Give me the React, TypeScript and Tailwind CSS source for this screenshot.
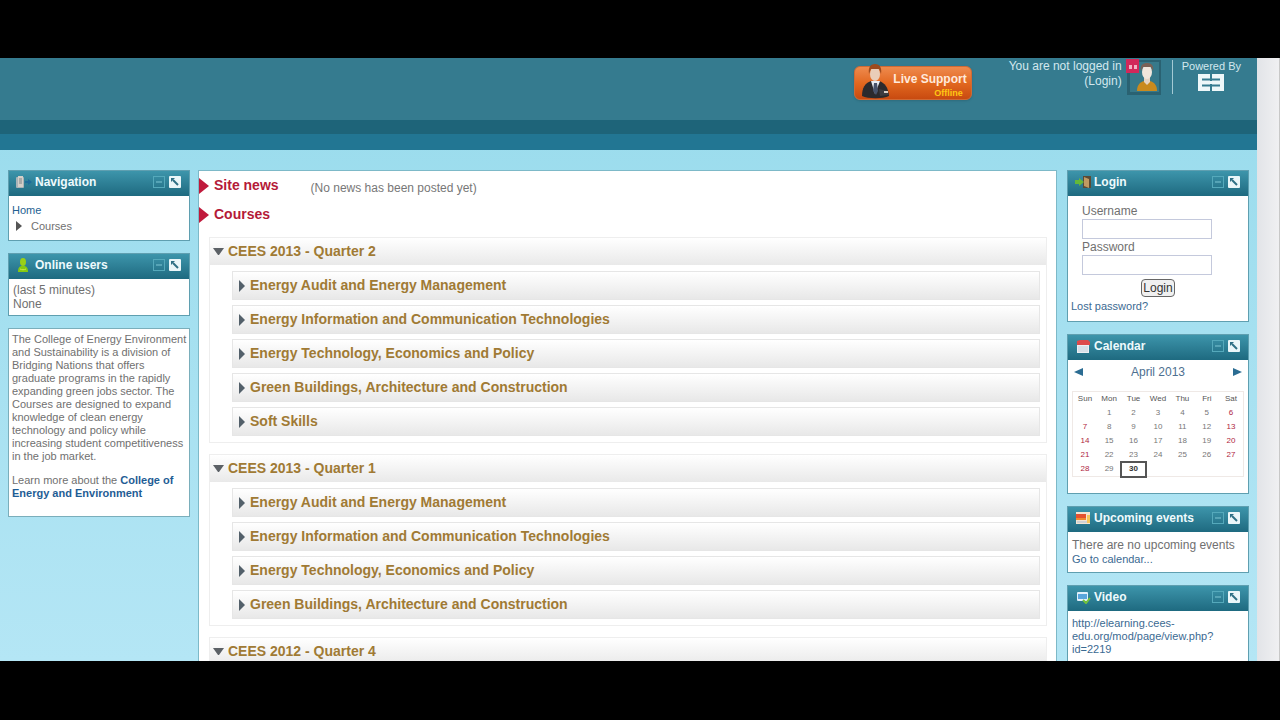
import { useState, type ReactNode } from "react";

const CATEGORIES = [
  {
    title: "CEES 2013 - Quarter 2",
    courses: [
      "Energy Audit and Energy Management",
      "Energy Information and Communication Technologies",
      "Energy Technology, Economics and Policy",
      "Green Buildings, Architecture and Construction",
      "Soft Skills",
    ],
  },
  {
    title: "CEES 2013 - Quarter 1",
    courses: [
      "Energy Audit and Energy Management",
      "Energy Information and Communication Technologies",
      "Energy Technology, Economics and Policy",
      "Green Buildings, Architecture and Construction",
    ],
  },
  {
    title: "CEES 2012 - Quarter 4",
    courses: [],
  },
];

const DAYS = ["Sun", "Mon", "Tue", "Wed", "Thu", "Fri", "Sat"];
const WEEKS = [
  [0, 1, 2, 3, 4, 5, 6],
  [7, 8, 9, 10, 11, 12, 13],
  [14, 15, 16, 17, 18, 19, 20],
  [21, 22, 23, 24, 25, 26, 27],
  [28, 29, 30, 0, 0, 0, 0],
];
const TODAY = 30;

function NavigationIcon() {
  return (
    <svg width="18" height="14" viewBox="0 0 18 14" aria-hidden="true">
      <rect x="1" y="2" width="8" height="11" rx="1" fill="#a9b4b8" />
      <rect x="3" y="1" width="5" height="11" fill="#d5cfc8" />
      <path d="M4 4h3M4 6h3M4 8h3" stroke="#7c8589" />
      <path d="M10 6h3V4l4 3-4 3V8h-3z" fill="#1f6c9a" />
    </svg>
  );
}

function UserIcon() {
  return (
    <svg width="18" height="14" viewBox="0 0 18 14" aria-hidden="true">
      <ellipse cx="8" cy="4" rx="3" ry="4" fill="#9ad018" />
      <path d="M3 14c0-4 1-5 3-6h4c2 1 3 2 3 6z" fill="#86c912" />
      <path d="M5 11c2 1 4 1 6 0" stroke="#d0ea4a" fill="none" />
    </svg>
  );
}

function LoginIcon() {
  return (
    <svg width="18" height="14" viewBox="0 0 18 14" aria-hidden="true">
      <path d="M9 1h8v12H9z" fill="#5b4a34" />
      <path d="M10 2l5 2v9l-5-2z" fill="#c09a62" />
      <path d="M1 5h4V3l5 4-5 4V9H1z" fill="#64b83a" />
    </svg>
  );
}

function CalendarIcon() {
  return (
    <svg width="18" height="14" viewBox="0 0 18 14" aria-hidden="true">
      <rect x="3" y="2" width="12" height="12" fill="#eceff3" />
      <path d="M3 2l3-1h8l2 2v3H3z" fill="#dd4a4c" />
      <path d="M4 8h10M4 10h10M4 12h10" stroke="#c3d0dc" />
    </svg>
  );
}

function EventsIcon() {
  return (
    <svg width="18" height="14" viewBox="0 0 18 14" aria-hidden="true">
      <rect x="2" y="1" width="14" height="12" fill="#f3e4d2" />
      <rect x="2" y="3" width="10" height="4" fill="#e5512f" />
      <path d="M2 7h10v2H2z" fill="#f08a30" />
      <path d="M3 11h10" stroke="#aebfd2" />
      <rect x="13" y="4" width="3" height="8" fill="#f6c65a" />
    </svg>
  );
}

function VideoIcon() {
  return (
    <svg width="18" height="14" viewBox="0 0 18 14" aria-hidden="true">
      <rect x="3" y="2" width="11" height="9" rx="1" fill="#e2f0fb" />
      <rect x="4" y="4" width="9" height="5" fill="#5aa6dc" />
      <path d="M9 10l3 3 4-5" stroke="#74c23a" strokeWidth="2" fill="none" />
    </svg>
  );
}

function Block({
  title,
  icon,
  children,
}: {
  title: string;
  icon: ReactNode;
  children: ReactNode;
}) {
  return (
    <section className="border border-[#5f9fb0] bg-white">
      <div className="flex h-[25px] items-center bg-linear-to-b from-[#3d95ab] to-[#1e6a80] pr-2 pb-1 pl-1.5">
        {icon}
        <h2 className="ml-0.5 flex-1 text-[12px] leading-4 font-bold whitespace-nowrap text-[#eefafd]">
          {title}
        </h2>
        <button type="button" aria-label={`Hide ${title} block`} className="mr-1">
          <svg width="12" height="12" viewBox="0 0 12 12" fill="none">
            <rect x=".5" y=".5" width="11" height="11" stroke="#55a9bb" />
            <path d="M3 6h6" stroke="#7fc6d4" />
          </svg>
        </button>
        <button type="button" aria-label={`Dock ${title} block`}>
          <svg width="12" height="12" viewBox="0 0 12 12" fill="none">
            <rect width="12" height="12" rx="1" fill="#eaf6f9" />
            <path d="M4 4l5 5" stroke="#2e6f85" strokeWidth="2" />
            <path d="M2 6V2h4z" fill="#2e6f85" />
          </svg>
        </button>
      </div>
      {children}
    </section>
  );
}

function LiveSupport() {
  return (
    <button
      type="button"
      className="relative flex h-[34px] w-[118px] flex-col items-end rounded-md border border-[#cf6a35] bg-linear-to-b from-[#ee8a4c] via-[#e2681f] to-[#c84a10] pt-1 pr-1 shadow"
    >
      <svg
        className="absolute -top-1 left-1.5"
        width="30"
        height="36"
        viewBox="0 0 30 36"
        aria-hidden="true"
      >
        <path d="M1 33c0-8 3-13 9-15h8c6 2 9 6 10 15-6 3-21 3-27 0z" fill="#2b2a2d" />
        <path d="M10 18l4 13 5-13z" fill="#e8edf2" />
        <path d="M13 20h3l1 8-2 4-3-4z" fill="#47536b" />
        <path d="M18 26l8 2 2 4-9 1z" fill="#3d3c40" />
        <path d="M23 28h4v2h-4z" fill="#d8d0c8" />
        <ellipse cx="14" cy="11" rx="5" ry="7" fill="#e9cdb9" />
        <path d="M8 11c-1-6 1-10 6-10s7 4 6 10l-2-5h-8z" fill="#9c4a1d" />
      </svg>
      <span className="text-[12px] leading-4 font-bold text-[#ffe9dc]">Live Support</span>
      <span className="pr-1 text-[9px] leading-3 font-bold text-[#ffc814]">Offline</span>
    </button>
  );
}

function Header() {
  return (
    <header>
      <div className="flex h-[62px] items-start justify-end bg-[#357b8f] pr-4 text-[#d3e8ee]">
        <div className="mt-2 mr-[30px]">
          <LiveSupport />
        </div>
        <p className="mt-px w-[120px] text-right text-[12px] leading-[15px] whitespace-nowrap">
          You are not logged in
          <br />
          (<a href="#login">Login</a>)
        </p>
        <svg className="ml-1 mt-px" width="36" height="36" viewBox="0 0 36 36" aria-hidden="true">
          <rect x="1" y="1" width="34" height="35" fill="#2a6272" />
          <rect x="4" y="3" width="29" height="30" fill="#37798a" />
          <path d="M11 32c0-6 3-9 7-10h6c4 1 7 4 7 10z" fill="#c98a1e" />
          <path d="M18 18h6v5l-3 3-3-3z" fill="#e5d3c2" />
          <ellipse cx="21" cy="13" rx="5" ry="7" fill="#f0e6dc" />
          <path d="M15 12c-1-6 2-8 6-8s7 2 6 8l-2-4h-8z" fill="#7a6156" />
          <rect width="13" height="14" fill="#d2285a" />
          <path d="M3 6h3v4H3zM8 6h3v4H8z" fill="#f2b3c4" />
        </svg>
        <div className="mt-0.5 ml-2.5 h-[34px] border-l border-[#a4cad4]" />
        <div className="mt-px ml-[9px] flex flex-col items-center">
          <span className="text-[11px] leading-[14px] whitespace-nowrap">Powered By</span>
          <svg className="mt-px" width="26" height="17" viewBox="0 0 26 17" aria-hidden="true">
            <path d="M0 0h12v17H0zM14 0h12v17H14z" fill="#eef7f9" />
            <path d="M0 8.5h26" stroke="#eef7f9" strokeWidth="3" />
            <path d="M4 5.5h18M4 11.5h18" stroke="#357b8f" strokeWidth="2" />
          </svg>
        </div>
      </div>
      <div className="h-3.5 bg-[#1e6479]" />
      <div className="h-4 bg-[#227693]" />
    </header>
  );
}

function Category({ title, courses }: { title: string; courses: string[] }) {
  const [open, setOpen] = useState(true);

  return (
    <section className="border border-[#eeeeee]">
      <h3>
        <button
          type="button"
          aria-expanded={open}
          onClick={() => setOpen(!open)}
          className="flex h-[27px] w-full items-center gap-1 bg-linear-to-b from-white to-[#e9e9e9] pl-[3px]"
        >
          <svg width="11" height="7" viewBox="0 0 11 7" aria-hidden="true">
            <path d={open ? "M0 0h11L6 7H5z" : "M2 0l6 3-6 4z"} fill="#5c6166" />
          </svg>
          {title}
        </button>
      </h3>
      {open && courses.length > 0 && (
        <ul className="flex flex-col gap-[5px] py-1.5 pr-1.5 pl-[22px]">
          {courses.map((course) => (
            <li key={course}>
              <button
                type="button"
                className="flex h-[29px] w-full items-center gap-1 border border-[#e6e6e6] bg-linear-to-b from-white to-[#e8e8e8] pl-1"
              >
                <svg width="9" height="12" viewBox="0 0 9 12" aria-hidden="true">
                  <path d="M2 0l6 6-6 6z" fill="#53606a" />
                </svg>
                {course}
              </button>
            </li>
          ))}
        </ul>
      )}
    </section>
  );
}

function Heading({ children }: { children: ReactNode }) {
  return (
    <h2 className="flex h-[29px] items-center gap-1 text-[14px] font-bold text-[#b41a38]">
      <svg width="11" height="16" viewBox="0 0 11 16" aria-hidden="true">
        <path d="M0 0l10 8-10 8z" fill="#c01a3c" />
      </svg>
      {children}
    </h2>
  );
}

function Calendar() {
  return (
    <Block title="Calendar" icon={<CalendarIcon />}>
      <div className="flex h-6 items-center justify-between px-1.5 text-[12px] text-[#4d6f90]">
        <button type="button" aria-label="Previous month">
          <svg width="9" height="8" viewBox="0 0 9 8">
            <path d="M9 0v8L0 4z" fill="#2b6c92" />
          </svg>
        </button>
        <a href="#month">April 2013</a>
        <button type="button" aria-label="Next month">
          <svg width="9" height="8" viewBox="0 0 9 8">
            <path d="M0 0v8l9-4z" fill="#2b6c92" />
          </svg>
        </button>
      </div>
      <div className="px-1 pt-[7px] pb-4">
        <table className="w-full table-fixed border border-[#efe9e6] text-center text-[8px] leading-[14px] text-[#777]">
          <thead>
            <tr>
              {DAYS.map((day) => (
                <th key={day} className="h-[14px] p-0 font-normal text-[#555]">
                  {day}
                </th>
              ))}
            </tr>
          </thead>
          <tbody>
            {WEEKS.map((week) => (
              <tr key={week[1]}>
                {week.map((day, i) => (
                  <td
                    key={i}
                    className={
                      day === TODAY
                        ? "h-[14px] p-0 font-bold text-[#333] outline-2 -outline-offset-1 outline-[#555]"
                        : i === 0 || i === 6
                          ? "h-[14px] p-0 text-[#b0273f]"
                          : "h-[14px] p-0"
                    }
                  >
                    {day > 0 && day}
                  </td>
                ))}
              </tr>
            ))}
          </tbody>
        </table>
      </div>
    </Block>
  );
}

export default function App() {
  return (
    <div className="flex h-screen flex-col overflow-hidden bg-black pt-[58px] pb-[59px] font-['Liberation_Sans',sans-serif]">
      <div className="flex min-h-0 flex-1 overflow-hidden">
        <div className="flex-1 bg-linear-to-b from-[#98dbec] to-[#b4e6f5]">
          <Header />
          <div className="flex items-start pt-5 pr-2 pl-2 text-[12px] text-[#707070]">
            <aside className="mr-2 flex w-[182px] shrink-0 flex-col gap-3">
              <Block title="Navigation" icon={<NavigationIcon />}>
                <div className="px-[3px] pt-1.5 pb-1.5 text-[11px] leading-4">
                  <a href="#home" className="block text-[#245f92]">
                    Home
                  </a>
                  <a href="#courses" className="flex items-center gap-2 pl-1">
                    <svg width="7" height="10" viewBox="0 0 7 10" aria-hidden="true">
                      <path d="M0 0l6 5-6 5z" fill="#555" />
                    </svg>
                    Courses
                  </a>
                </div>
              </Block>
              <Block title="Online users" icon={<UserIcon />}>
                <p className="px-1 py-1 leading-[14px]">
                  (last 5 minutes)
                  <br />
                  None
                </p>
              </Block>
              <section className="border border-[#7aaebb] bg-white px-[3px] pt-1 pb-4 text-[11px] leading-[13px] whitespace-nowrap">
                <p>
                  The College of Energy Environment
                  <br />
                  and Sustainability is a division of
                  <br />
                  Bridging Nations that offers
                  <br />
                  graduate programs in the rapidly
                  <br />
                  expanding green jobs sector. The
                  <br />
                  Courses are designed to expand
                  <br />
                  knowledge of clean energy
                  <br />
                  technology and policy while
                  <br />
                  increasing student competitiveness
                  <br />
                  in the job market.
                </p>
                <p className="mt-[11px]">
                  Learn more about the{" "}
                  <a href="#college" className="font-bold text-[#1f5d95]">
                    College of
                    <br />
                    Energy and Environment
                  </a>
                </p>
              </section>
            </aside>

            <main className="min-w-0 flex-1 border border-[#7db9c8] bg-white pb-4">
              <div className="flex items-center gap-8">
                <Heading>Site news</Heading>
                <p className="pt-1 text-[#777]">(No news has been posted yet)</p>
              </div>
              <Heading>Courses</Heading>
              <div className="flex flex-col gap-[11px] pt-2 pr-[9px] pl-2.5 text-[14px] font-bold text-[#a07a34]">
                {CATEGORIES.map((category) => (
                  <Category key={category.title} {...category} />
                ))}
              </div>
            </main>

            <aside className="ml-2.5 flex w-[182px] shrink-0 flex-col gap-3">
              <Block title="Login" icon={<LoginIcon />}>
                <form className="px-3.5 pt-2" onSubmit={(e) => e.preventDefault()}>
                  <label htmlFor="username" className="block leading-[15px]">
                    Username
                  </label>
                  <input
                    id="username"
                    type="text"
                    className="block h-5 w-[130px] border border-[#c4c9dc] bg-white px-1"
                  />
                  <label htmlFor="password" className="block leading-4">
                    Password
                  </label>
                  <input
                    id="password"
                    type="password"
                    className="block h-5 w-[130px] border border-[#c4c9dc] bg-white px-1"
                  />
                  <button
                    type="submit"
                    className="mx-auto mt-1 block h-[18px] rounded-sm border border-[#666] bg-[#f0f0f0] px-px leading-4 text-[#333]"
                  >
                    Login
                  </button>
                </form>
                <a
                  href="#forgot"
                  className="mt-0.5 mb-2 block px-[3px] text-[11px] leading-[14px] text-[#3b6a92]"
                >
                  Lost password?
                </a>
              </Block>
              <Calendar />
              <Block title="Upcoming events" icon={<EventsIcon />}>
                <div className="px-1 py-1.5 whitespace-nowrap">
                  <p className="leading-[14px]">There are no upcoming events</p>
                  <a href="#calendar" className="block text-[11px] leading-[14px] text-[#3b6a92]">
                    Go to calendar...
                  </a>
                </div>
              </Block>
              <Block title="Video" icon={<VideoIcon />}>
                <a
                  href="#video"
                  className="block px-1 py-1.5 text-[11px] leading-[13px] text-[#3b6a92]"
                >
                  http://elearning.cees-
                  <br />
                  edu.org/mod/page/view.php?
                  <br />
                  id=2219
                </a>
              </Block>
            </aside>
          </div>
        </div>
        <div className="w-[23px] shrink-0 border-r border-[#c8c8c8] bg-linear-to-r from-[#e2e4e8] to-[#f0f0f2]" />
      </div>
    </div>
  );
}
